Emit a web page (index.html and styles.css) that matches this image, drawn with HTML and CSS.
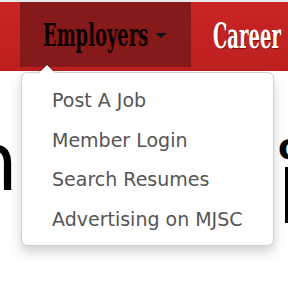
FILE: index.html
```html
<!DOCTYPE html>
<html>
<head>
<meta charset="utf-8">
<link rel="stylesheet" href="styles.css">
</head>
<body>
<div class="topstrip"></div>
<nav class="navbar">
  <div class="nav-item active">
    <span class="brand-text dark">Employers</span>
    <span class="caret"></span>
  </div>
  <div class="nav-item">
    <span class="brand-text light">Career</span>
  </div>
</nav>
<main class="content">
  <div class="frag-left"><span class="big-m">m</span></div>
  <div class="frag-right">
    <span class="frag-o">ó</span>
    <span class="frag-i">I</span>
  </div>
</main>
<ul class="dropdown">
  <li>Post A Job</li>
  <li>Member Login</li>
  <li>Search Resumes</li>
  <li>Advertising on MJSC</li>
</ul>
</body>
</html>
```
FILE: styles.css
```css
html, body {
  margin: 0;
  padding: 0;
  background: #ffffff;
  width: 288px;
  height: 288px;
  overflow: hidden;
}
body {
  position: relative;
  font-family: "DejaVu Sans", Verdana, sans-serif;
}
.topstrip {
  height: 2px;
  background: #e9e9e9;
}
.navbar {
  display: flex;
  gap: 22px;
  padding-left: 20px;
  padding-bottom: 4px;
  background: linear-gradient(#c92525, #bd1f1f);
  height: 65px;
  overflow: hidden;
}
.nav-item {
  display: flex;
  align-items: center;
  height: 65px;
  white-space: nowrap;
  flex-shrink: 0;
}
.nav-item.active {
  width: 171px;
  background: #861919;
  padding-left: 23px;
  box-sizing: border-box;
}
.brand-text {
  font-family: "DejaVu Serif", serif;
  font-weight: bold;
  display: inline-block;
  transform-origin: left center;
}
.brand-text.dark {
  color: #0d0000;
  font-size: 32px;
  width: 105px;
  transform: scaleX(0.56);
}
.brand-text.light {
  color: #ffffff;
  font-size: 36px;
  transform: scaleX(0.5);
  text-shadow: 1px 1px 0 #7a1010;
}
.caret {
  width: 0;
  height: 0;
  border-left: 6px solid transparent;
  border-right: 6px solid transparent;
  border-top: 5px solid #111;
  margin-left: 7px;
  margin-top: 2px;
}
.content {
  display: flex;
  justify-content: space-between;
  height: 217px;
}
.frag-left {
  width: 18px;
  overflow: hidden;
  display: flex;
  justify-content: flex-end;
  padding-top: 52px;
}
.big-m {
  font-size: 80px;
  line-height: 80px;
  color: #000;
  flex-shrink: 0;
}
.frag-right {
  width: 10px;
  overflow: hidden;
  display: flex;
  flex-direction: column;
  padding-top: 58px;
}
.frag-o {
  font-size: 36px;
  font-weight: bold;
  line-height: 36px;
  color: #000;
}
.frag-i {
  font-size: 76px;
  font-weight: bold;
  line-height: 64px;
  color: #000;
}
.dropdown {
  position: absolute;
  left: 21px;
  top: 72px;
  width: 253px;
  height: 174px;
  box-sizing: border-box;
  margin: 0;
  padding: 8px 0 0 0;
  list-style: none;
  background: #fff;
  border: 1px solid rgba(0,0,0,0.18);
  border-radius: 6px;
  box-shadow: 0 6px 12px rgba(0,0,0,0.18);
}
.dropdown::before {
  content: "";
  position: absolute;
  left: 16px;
  top: -10px;
  border-left: 9px solid transparent;
  border-right: 9px solid transparent;
  border-bottom: 9px solid rgba(0,0,0,0.15);
}
.dropdown::after {
  content: "";
  position: absolute;
  left: 17px;
  top: -8px;
  border-left: 8px solid transparent;
  border-right: 8px solid transparent;
  border-bottom: 8px solid #fff;
}
.dropdown li {
  height: 39.5px;
  line-height: 39.5px;
  padding-left: 30px;
  font-size: 19px;
  color: #555;
  white-space: nowrap;
}
```
